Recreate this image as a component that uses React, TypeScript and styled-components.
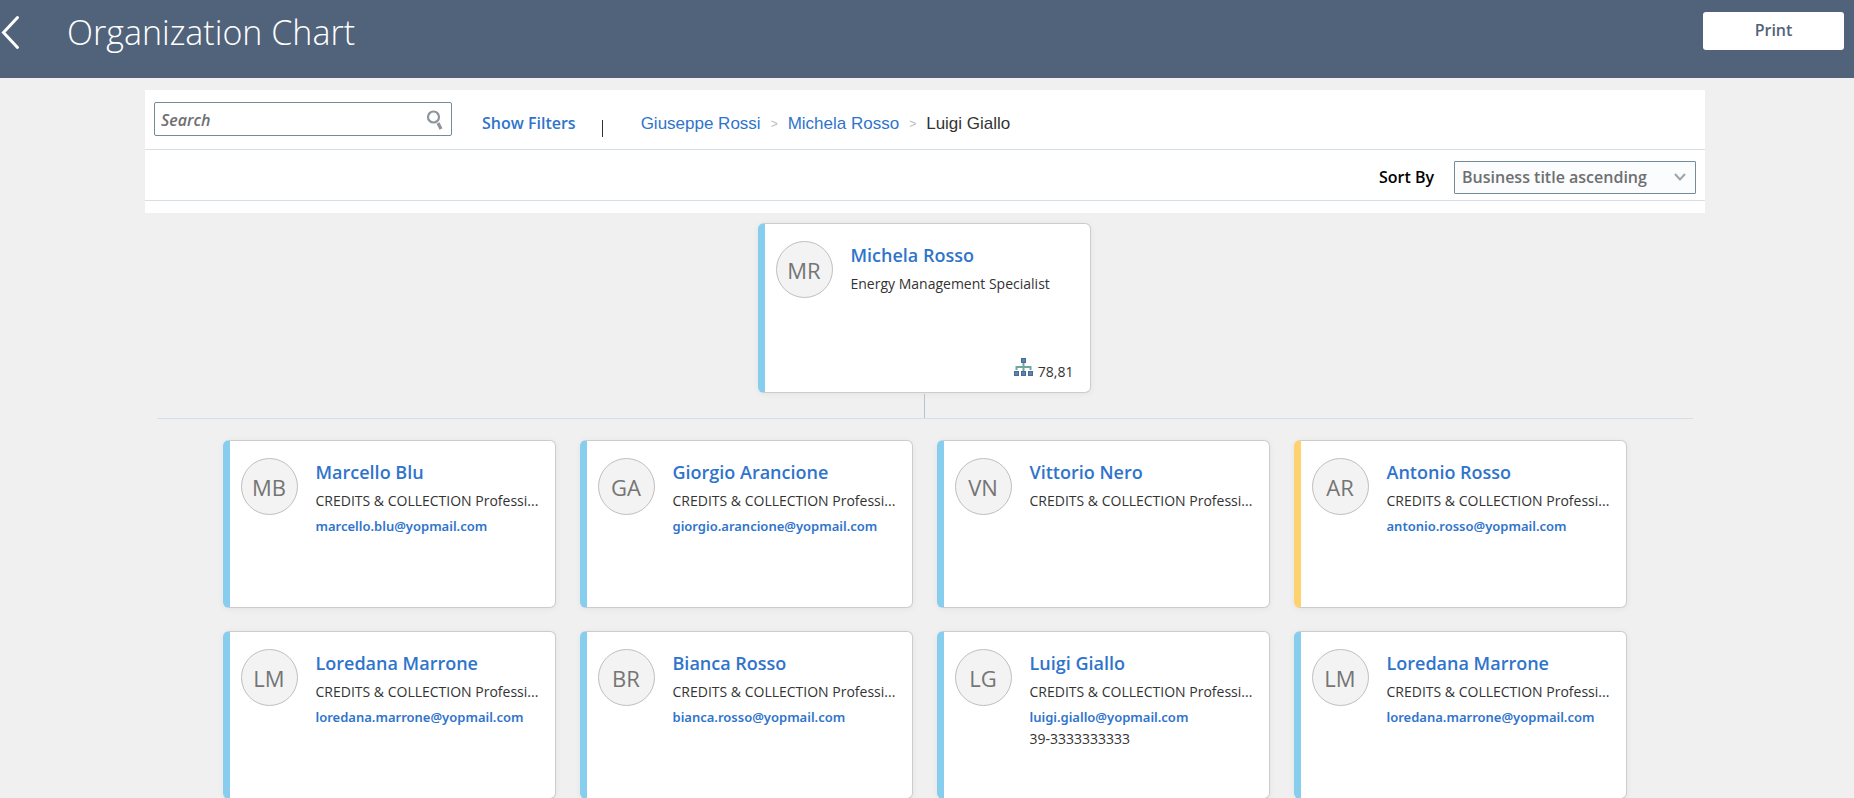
import React from "react";
import styled, { createGlobalStyle } from "styled-components";

const GlobalStyle = createGlobalStyle`
  *, *::before, *::after { box-sizing: border-box; }
  body {
    margin: 0;
    background: #f0f0f0;
    color: #333;
    font-family: "Open Sans", "Noto Sans", sans-serif;
    font-size: 16px;
  }
  a { color: #2f74cc; text-decoration: none; }
  h1, h2, h3, p, ul, ol { margin: 0; padding: 0; }
  ul, ol { list-style: none; }
`;

const Header = styled.header`
  display: flex;
  align-items: flex-start;
  min-height: 78px;
  padding-right: 10px;
  background: #51627b;
  color: #fff;
`;

const BackButton = styled.button`
  display: flex;
  width: 67px;
  padding: 15px 0 0 1px;
  border: 0;
  background: none;
  color: inherit;
`;

const Title = styled.h1`
  flex: 1;
  padding-top: 8px;
  font-size: 34px;
  line-height: 48px;
  font-weight: 300;
`;

const PrintButton = styled.button`
  width: 141px;
  height: 38px;
  margin-top: 12px;
  padding-bottom: 3px;
  border: 0;
  border-radius: 3px;
  background: #fff;
  color: #51627b;
  font: 600 16px "Open Sans", sans-serif;
`;

const Page = styled.main`
  display: flex;
  flex-direction: column;
  max-width: 1564px;
  margin: 0 auto;
  padding: 12px 4px 0 0;
`;

const Toolbar = styled.section`
  padding-bottom: 12px;
  background: #fff;
`;

const FilterRow = styled.div`
  display: flex;
  align-items: center;
  height: 60px;
  padding: 0 9px 2px;
  border-bottom: 1px solid #d6dfe6;
`;

const SortRow = styled.div`
  display: flex;
  align-items: center;
  justify-content: flex-end;
  height: 51px;
  padding: 4px 9px 0;
  border-bottom: 1px solid #d6dfe6;
`;

const SearchBox = styled.label`
  display: flex;
  align-items: center;
  width: 298px;
  height: 34px;
  margin-right: 30px;
  padding: 2px 8px 0 6px;
  border: 1px solid #758c98;
  border-radius: 2px;
`;

const SearchInput = styled.input`
  flex: 1;
  min-width: 0;
  padding: 0;
  border: 0;
  outline: 0;
  font: italic 600 16px "Open Sans", sans-serif;
  &::placeholder { color: #6f6f6f; }
`;

const FiltersLink = styled.a`
  padding-top: 8px;
  font-weight: 600;
`;

const Divider = styled.span`
  width: 1px;
  height: 17px;
  margin: 19px 38px 0 26px;
  background: #333;
`;

const Trail = styled.ol`
  display: flex;
  align-items: center;
  padding-top: 10px;
  font: 17px "Liberation Sans", Arial, sans-serif;
`;

const Crumb = styled.li`
  display: flex;
  align-items: center;
  & + &::before {
    content: ">";
    margin: 0 10px;
    color: #bbb;
    font-size: 12px;
  }
`;

const SortLabel = styled.label`
  margin-right: 20px;
  color: #000;
  font-size: 16px;
  font-weight: 600;
`;

const SelectWrap = styled.div`
  display: grid;
  align-items: center;
  width: 242px;
  & > * { grid-area: 1 / 1; }
  & > svg { justify-self: end; margin-right: 10px; pointer-events: none; }
`;

const SortSelect = styled.select`
  appearance: none;
  height: 33px;
  padding: 0 7px;
  border: 1px solid #758c98;
  border-radius: 1px;
  background: #fafcfe;
  color: #6f6f6f;
  font: 600 16px "Open Sans", sans-serif;
`;

const Manager = styled.div`
  display: flex;
  flex-direction: column;
  align-items: center;
  margin: 10px 12px 0;
  padding-right: 2px;
  border-bottom: 1px solid #d6dfe6;
`;

const Connector = styled.span`
  width: 1px;
  height: 24px;
  margin-top: 1px;
  background: #b2c4d3;
`;

const Reports = styled.ul`
  display: flex;
  flex-wrap: wrap;
  justify-content: center;
  gap: 23px 24px;
  padding: 21px 1px 21px 0;
`;

const Card = styled.article<{ $accent: string; $tall?: boolean }>`
  display: flex;
  gap: 18px;
  width: 333px;
  min-height: ${(p) => (p.$tall ? 170 : 168)}px;
  padding: 17px 14px 10px 11px;
  border: 1px solid #ccc;
  border-left: 7px solid ${(p) => p.$accent};
  border-radius: 6px;
  background: #fff;
  box-shadow: 0 1px 6px rgba(0, 0, 0, 0.06);
`;

const Avatar = styled.span`
  display: flex;
  flex: none;
  align-items: center;
  justify-content: center;
  width: 57px;
  height: 57px;
  border: 1px solid #bfbfbf;
  border-radius: 50%;
  background: #f3f3f3;
  color: #757575;
  font-size: 22px;
`;

const Details = styled.div`
  display: flex;
  flex: 1;
  flex-direction: column;
  min-width: 0;
`;

const Name = styled.h2`
  margin-bottom: 4px;
  font-size: 18px;
  line-height: 28px;
  font-weight: 600;
`;

const JobTitle = styled.p`
  color: #333;
  font-size: 14px;
  line-height: 22px;
  white-space: nowrap;
`;

const Email = styled.a`
  margin-top: 3px;
  font-family: "Noto Sans", sans-serif;
  font-size: 13px;
  line-height: 22px;
  font-weight: 600;
`;

const Phone = styled.p`
  font-size: 14px;
  line-height: 22px;
`;

const TeamSize = styled.p`
  display: flex;
  align-items: flex-end;
  justify-content: flex-end;
  gap: 5px;
  margin-top: auto;
  padding-right: 2px;
  font-size: 14px;
  line-height: 20px;
  & > svg { margin-bottom: 6px; }
`;

type Person = {
  name: string;
  initials: string;
  title: string;
  email?: string;
  phone?: string;
  team?: string;
  accent?: string;
};

const BLUE = "#87cdee";
const YELLOW = "#fed36f";
const CREDITS = "CREDITS & COLLECTION Professi...";

const manager: Person = { name: "Michela Rosso", initials: "MR", title: "Energy Management Specialist", team: "78,81" };

const reports: Person[] = [
  { name: "Marcello Blu", initials: "MB", title: CREDITS, email: "marcello.blu@yopmail.com" },
  { name: "Giorgio Arancione", initials: "GA", title: CREDITS, email: "giorgio.arancione@yopmail.com" },
  { name: "Vittorio Nero", initials: "VN", title: CREDITS },
  { name: "Antonio Rosso", initials: "AR", title: CREDITS, email: "antonio.rosso@yopmail.com", accent: YELLOW },
  { name: "Loredana Marrone", initials: "LM", title: CREDITS, email: "loredana.marrone@yopmail.com" },
  { name: "Bianca Rosso", initials: "BR", title: CREDITS, email: "bianca.rosso@yopmail.com" },
  { name: "Luigi Giallo", initials: "LG", title: CREDITS, email: "luigi.giallo@yopmail.com", phone: "39-3333333333" },
  { name: "Loredana Marrone", initials: "LM", title: CREDITS, email: "loredana.marrone@yopmail.com" },
];

const BackIcon = () => (
  <svg width="20" height="36" viewBox="0 0 20 36" fill="none" stroke="currentColor" strokeWidth="3" strokeLinecap="round" aria-hidden="true">
    <path d="M16.5 2.500 2.500 17.500 16.500 32.500" />
  </svg>
);

const SearchIcon = () => (
  <svg width="17" height="20" viewBox="0 0 17 20" fill="none" stroke="#8e9499" aria-hidden="true">
    <circle cx="7.500" cy="7" r="5.500" strokeWidth="2.200" />
    <path d="M12 13 15 19" strokeWidth="3.200" />
  </svg>
);

const ChevronIcon = () => (
  <svg width="12" height="8" viewBox="0 0 12 8" fill="none" stroke="#a0a4a8" strokeWidth="2" aria-hidden="true">
    <path d="M1 1 6 6.500 11 1" />
  </svg>
);

const TeamIcon = () => (
  <svg width="19" height="18" viewBox="0 0 19 18" aria-hidden="true">
    <path d="M9.500 5v8M2.500 12V9h14v3" fill="none" stroke="#6fa79b" strokeWidth="2" />
    <g fill="#5f83b4" stroke="#4a6a94" strokeWidth="1">
      <rect x="7.500" y="0.500" width="4" height="4" />
      <rect x="0.500" y="13.500" width="4" height="4" />
      <rect x="7.500" y="13.500" width="4" height="4" />
      <rect x="14.500" y="13.500" width="4" height="4" />
    </g>
  </svg>
);

const PersonCard = ({ person }: { person: Person }) => (
  <Card $accent={person.accent ?? BLUE} $tall={Boolean(person.team)}>
    <Avatar>{person.initials}</Avatar>
    <Details>
      <Name><a href="#profile">{person.name}</a></Name>
      <JobTitle>{person.title}</JobTitle>
      {person.email && <Email href={`mailto:${person.email}`}>{person.email}</Email>}
      {person.phone && <Phone>{person.phone}</Phone>}
      {person.team && <TeamSize><TeamIcon />{person.team}</TeamSize>}
    </Details>
  </Card>
);

export default function App() {
  return (
    <>
      <GlobalStyle />
      <Header>
        <BackButton type="button" aria-label="Back"><BackIcon /></BackButton>
        <Title>Organization Chart</Title>
        <PrintButton type="button">Print</PrintButton>
      </Header>
      <Page>
        <Toolbar>
          <FilterRow>
            <SearchBox>
              <SearchInput type="text" placeholder="Search" aria-label="Search" />
              <SearchIcon />
            </SearchBox>
            <FiltersLink href="#filters">Show Filters</FiltersLink>
            <Divider />
            <nav aria-label="Reporting line">
              <Trail>
                <Crumb><a href="#giuseppe-rossi">Giuseppe Rossi</a></Crumb>
                <Crumb><a href="#michela-rosso">Michela Rosso</a></Crumb>
                <Crumb aria-current="page">Luigi Giallo</Crumb>
              </Trail>
            </nav>
          </FilterRow>
          <SortRow>
            <SortLabel htmlFor="sort">Sort By</SortLabel>
            <SelectWrap>
              <SortSelect id="sort" defaultValue="asc">
                <option value="asc">Business title ascending</option>
                <option value="desc">Business title descending</option>
              </SortSelect>
              <ChevronIcon />
            </SelectWrap>
          </SortRow>
        </Toolbar>
        <Manager>
          <PersonCard person={manager} />
          <Connector />
        </Manager>
        <Reports>
          {reports.map((person, i) => (
            <li key={i}><PersonCard person={person} /></li>
          ))}
        </Reports>
      </Page>
    </>
  );
}
